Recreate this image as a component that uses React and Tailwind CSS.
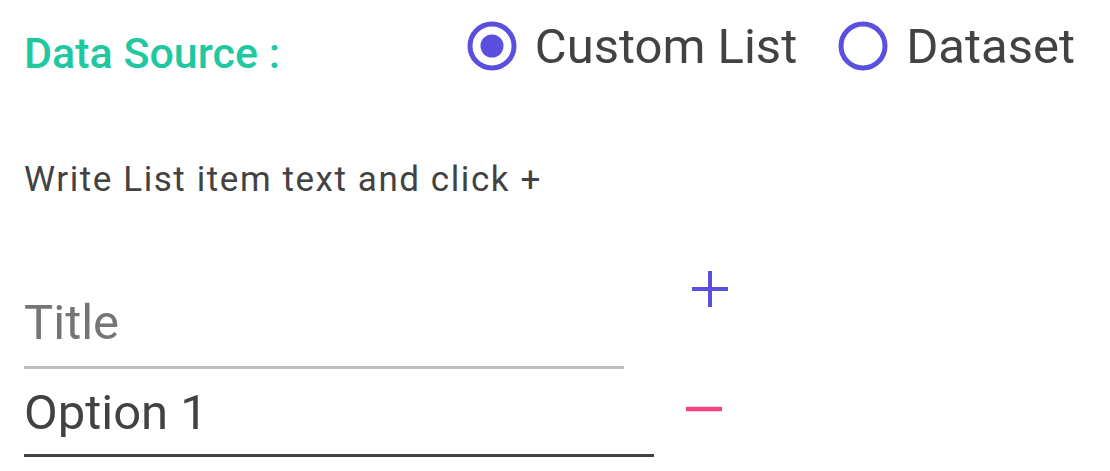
export default function App() {
  return (
    <div className="w-[1110px] h-[471px] bg-white text-[#424242] font-['Roboto',sans-serif] overflow-hidden pt-[21px]">
      <div className="flex items-center justify-between h-[50px] pl-6 pr-[35px]">
        <span className="text-[43px] leading-none font-medium text-[#1fc8a0] mt-[14px]">Data Source :</span>
        <div className="flex items-center">
          <label className="flex items-center gap-[18px]">
            <svg width="50" height="50" viewBox="0 0 50 50">
              <circle cx="25" cy="25" r="22" fill="none" stroke="#5a4fdf" strokeWidth="5" />
              <circle cx="25" cy="25" r="11.5" fill="#5a4fdf" />
            </svg>
            <span className="text-[49px] leading-none">Custom List</span>
          </label>
          <label className="flex items-center gap-[18px] ml-[41px]">
            <svg width="50" height="50" viewBox="0 0 50 50">
              <circle cx="25" cy="25" r="22" fill="none" stroke="#5a4fdf" strokeWidth="5" />
            </svg>
            <span className="text-[49px] leading-none">Dataset</span>
          </label>
        </div>
      </div>

      <p className="pl-6 mt-[91px] text-[35px] tracking-[0.045em] leading-none">Write List item text and click +</p>

      <div className="flex pl-6 mt-[101px]">
        <div className="w-[600px] border-b-[3px] border-[#bdbdbd] pb-[19px]">
          <input
            className="block w-full h-[49px] p-0 outline-none text-[49px] leading-none placeholder:text-[#757575]"
            placeholder="Title"
          />
        </div>
        <button className="ml-[68px] -mt-[27px] self-start text-[#5a4fdf]">
          <svg width="36" height="36" viewBox="0 0 36 36" className="block">
            <path d="M18 0v36M0 18h36" stroke="currentColor" strokeWidth="4" />
          </svg>
        </button>
      </div>

      <div className="flex pl-6">
        <div className="w-[630px] border-b-[3px] border-[#424242] pt-[19px] pb-[17px]">
          <input
            className="block w-full h-[49px] p-0 outline-none text-[49px] leading-none text-[#424242]"
            defaultValue="Option 1"
          />
        </div>
        <button className="ml-[32px] mt-[37px] self-start text-[#ff4081]">
          <svg width="36" height="6" viewBox="0 0 36 6" className="block">
            <path d="M0 3h36" stroke="currentColor" strokeWidth="4.5" />
          </svg>
        </button>
      </div>
    </div>
  );
}
